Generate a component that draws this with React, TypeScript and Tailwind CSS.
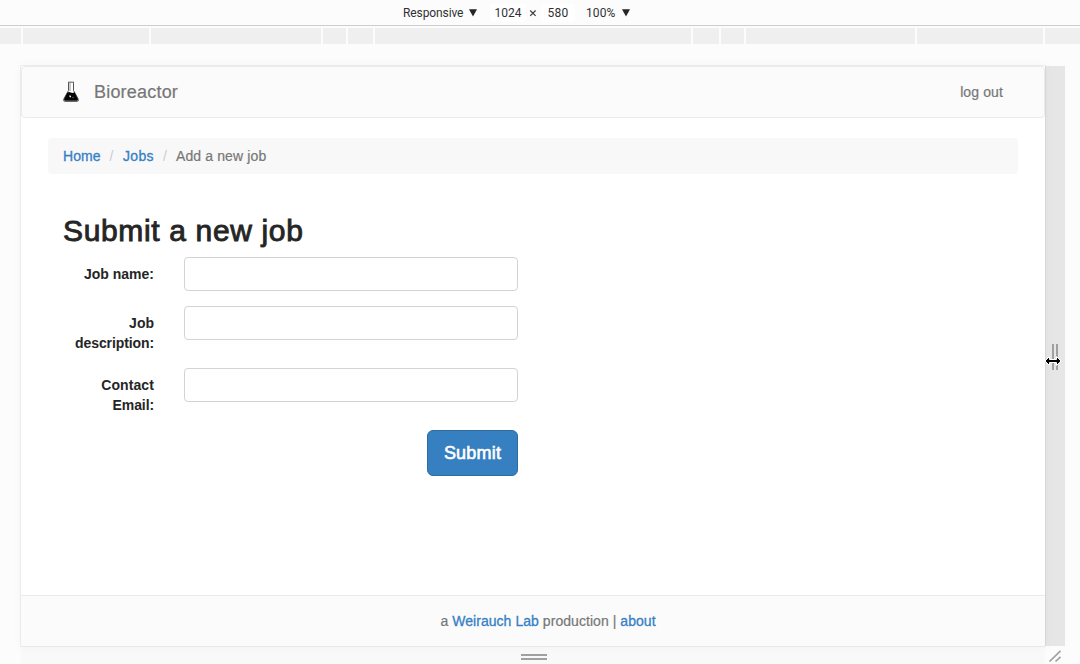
import React from "react";

const segments = [
  "w-[21px]",
  "w-[126px]",
  "w-[170px]",
  "w-[23px]",
  "w-[25px]",
  "w-[316px]",
  "w-[26px]",
  "w-[23px]",
  "w-[169px]",
  "w-[126px]",
  "w-[37px]",
];

function Caret() {
  return (
    <svg className="block" width="8" height="8" viewBox="0 0 8 8">
      <path d="M0 0.3H8L4 7.6Z" fill="#252525" />
    </svg>
  );
}

function Toolbar() {
  return (
    <div className="flex h-[26px] shrink-0 items-center border-b border-[#cdcdcd] pl-[403px] font-['Roboto',sans-serif] text-[12px] leading-[16px] text-[#303030]">
      <span className="w-[66px] whitespace-nowrap tracking-[-0.1px]">Responsive</span>
      <Caret />
      <span className="ml-[13px] flex h-[18px] w-[36px] items-center justify-center rounded-sm bg-white">1024</span>
      <svg className="ml-[3px] block" width="8" height="8" viewBox="0 0 8 8">
        <path d="M1.2 1.5L6.6 6.9M6.6 1.5L1.2 6.9" stroke="#454545" strokeWidth="1.3" />
      </svg>
      <span className="ml-[4px] flex h-[18px] w-[34px] items-center justify-center rounded-sm bg-white tracking-[0.2px]">580</span>
      <span className="ml-[11px] w-[36px] whitespace-nowrap tracking-[0.1px]">100%</span>
      <Caret />
    </div>
  );
}

function Flask() {
  return (
    <svg className="block shrink-0" width="18" height="22" viewBox="0 0 18 22">
      <path d="M6.5 1.5V9.5L1.9 17.8Q0.9 20.4 2.8 20.4H15.2Q17.1 20.4 16.1 17.8L11.5 9.5V1.5" fill="#fff" stroke="#555" strokeWidth="1" />
      <path d="M6 1.2H12" stroke="#555" strokeWidth="1" />
      <path d="M8 2V10" stroke="#c8c8c8" strokeWidth="2" />
      <path d="M5.1 12Q7 10.4 8.8 11.6Q10.5 12.5 12.6 11.2L15.9 18.1Q16.3 19.8 15 19.8H3Q1.7 19.8 2.1 18.1Z" fill="#050505" />
      <path d="M7.3 14.2L9.2 15L8.6 16.6L7.6 16Z" fill="#fff" />
      <path d="M10.5 16.5H11.5" stroke="#888" />
    </svg>
  );
}

function Field({ label, className }: { label: React.ReactNode; className: string }) {
  return (
    <label className={`flex ${className}`}>
      <span className="w-[106px] pt-[7px] text-right font-bold text-[#252525]">{label}</span>
      <input className="ml-[30px] h-[34px] w-[334px] rounded-[4px] border border-[#d3d3d3] bg-white px-3 outline-none" />
    </label>
  );
}

function Link({ children }: { children: React.ReactNode }) {
  return <a className="text-[#3680c4] [-webkit-text-stroke:0.3px_#3680c4]">{children}</a>;
}

export default function App() {
  return (
    <div className="flex h-[664px] w-[1080px] flex-col overflow-hidden bg-[#fcfcfc] font-['Liberation_Sans',Arial,sans-serif] text-[14px] leading-[20px]">
      <Toolbar />
      <div className="mt-[2px] flex h-[16px] shrink-0 gap-[2px]">
        {segments.map((w, i) => (
          <div key={i} className={`h-full shrink-0 bg-[#efefef] ${w}`} />
        ))}
      </div>
      <div className="mt-[22px] flex h-[580px] shrink-0 pl-[21px]">
        <div className="relative z-10 flex h-[580px] w-[1024px] flex-col bg-white shadow-[0_0_0_1px_rgba(0,0,0,0.05),0_0_10px_rgba(0,0,0,0.04)]">
          <nav className="flex h-[52px] items-center rounded-[4px] border border-[#ebebeb] bg-[#fbfbfb] pr-[41px] pl-[40px] text-[#777] [-webkit-text-stroke:0.2px_#777]">
            <Flask />
            <span className="ml-[14px] text-[18px] tracking-[0.2px]">Bioreactor</span>
            <span className="ml-auto tracking-[0.12px]">log out</span>
          </nav>
          <div className="mx-[27px] mt-[20px] flex h-[36px] items-center rounded-[4px] bg-[#f8f8f8] px-[15px] text-[#777]">
            <span className="w-[37px] whitespace-nowrap tracking-[0.1px]"><Link>Home</Link></span>
            <span className="w-[23px] text-center text-[#ccc]">/</span>
            <span className="w-[31px] whitespace-nowrap tracking-[0.3px]"><Link>Jobs</Link></span>
            <span className="w-[22px] text-center text-[#ccc]">/</span>
            <span className="tracking-[0.12px] [-webkit-text-stroke:0.2px_#777]">Add a new job</span>
          </div>
          <h1 className="mt-[40px] pl-[42px] text-[30px] leading-[33px] text-[#252525] [-webkit-text-stroke:0.9px_#252525]">
            <span className="tracking-[0.65px]">Submit a new job</span>
          </h1>
          <form className="mt-[10px] w-[497px] pl-[27px]">
            <Field label="Job name:" className="h-[49px]" />
            <Field label={<>Job<br /><span className="tracking-[-0.1px]">description:</span></>} className="h-[62px]" />
            <Field label={<><span className="tracking-[0.1px]">Contact</span><br /><span className="tracking-[-0.1px]">Email:</span></>} className="h-[62px]" />
            <div className="flex justify-end">
              <button type="button" className="h-[46px] w-[91px] rounded-[6px] border border-[#2e6da4] bg-[#3680c1] text-[18px] tracking-[0.2px] text-white [-webkit-text-stroke:0.6px_white]">
                Submit
              </button>
            </div>
          </form>
          <footer className="mt-auto flex h-[51px] items-center justify-center border-t border-[#ebebeb] bg-[#fbfbfb] pl-[30px] text-[#777]">
            <p className="tracking-[0.05px] [-webkit-text-stroke:0.2px_#777]">
              a <Link>Weirauch Lab</Link> production | <Link>about</Link>
            </p>
          </footer>
        </div>
        <div className="flex h-[580px] w-[20px] items-center justify-center gap-[2px] bg-[#e6e6e6] pt-[2px]">
          <span className="h-[26px] w-[2px] bg-[#a0a0a0]" />
          <span className="h-[26px] w-[2px] bg-[#a0a0a0]" />
        </div>
        <svg className="absolute top-[354px] left-[1044px] z-20" width="18" height="14" viewBox="0 0 18 14">
          <path d="M1 7L5.5 2.5V5.5H12.5V2.5L17 7L12.5 11.5V8.5H5.5V11.5Z" fill="#000" stroke="#fff" strokeWidth="1" />
        </svg>
      </div>
      <div className="flex flex-1 pl-[21px]">
        <div className="flex w-[1024px] flex-col items-center gap-[2px] bg-[#f9f9f9] pt-[8px] pl-[2px]">
          <span className="h-[2px] w-[26px] bg-[#a0a0a0]" />
          <span className="h-[2px] w-[26px] bg-[#a0a0a0]" />
        </div>
        <div className="w-[20px] pt-[4px] pl-[3px]">
          <svg className="block" width="14" height="13" viewBox="0 0 14 13">
            <path d="M1.5 11.5L12.5 0.8M7.5 11.5L12.5 6.8" stroke="#a0a0a0" strokeWidth="1.7" />
          </svg>
        </div>
      </div>
    </div>
  );
}
